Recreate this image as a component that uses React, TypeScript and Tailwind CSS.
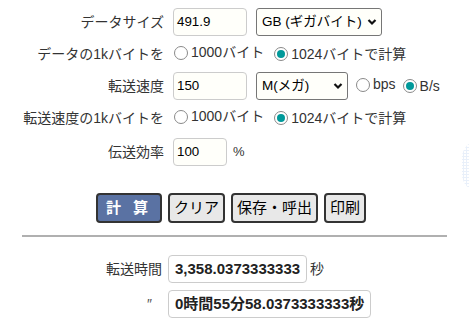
import React from "react";

const font = "font-['Liberation_Sans','Noto_Sans_CJK_JP',sans-serif]";

function Radio({ checked, label }: { checked?: boolean; label: string }) {
  return (
    <span className="inline-flex items-center">
      <span className="w-[14px] h-[14px] rounded-full border border-[#8a8a8a] bg-white flex items-center justify-center">
        {checked && <span className="w-[8px] h-[8px] rounded-full bg-[#00999a]" />}
      </span>
      <span className="ml-[3px]">{label}</span>
    </span>
  );
}

function Select({ value, w }: { value: string; w: string }) {
  return (
    <div
      className={`${w} h-[28px] border border-[#767676] rounded-[3px] bg-[#fffffa] flex items-center justify-between pl-[5px] pr-[4px] text-[13.5px] text-black`}
    >
      <span>{value}</span>
      <svg width="10" height="8" viewBox="0 0 10 8">
        <path d="M1.5 2 L5 5.5 L8.5 2" fill="none" stroke="#111" strokeWidth="2.2" />
      </svg>
    </div>
  );
}

function Field({ value, w }: { value: string; w: string }) {
  return (
    <div
      className={`${w} h-[28px] border border-[#cccccc] rounded-[4px] bg-[#fffffa] flex items-center pl-[3px] text-[13.33px] text-black`}
    >
      {value}
    </div>
  );
}

function Row({ label, children, h = "h-[28px]" }: { label: string; children: React.ReactNode; h?: string }) {
  return (
    <div className={`flex items-center ${h}`}>
      <div className="w-[164px] text-right text-[14px] text-[#333]">{label}</div>
      <div className="pl-[9px] flex items-center text-[14px] text-[#333]">{children}</div>
    </div>
  );
}

function Btn({ children, primary }: { children: React.ReactNode; primary?: boolean }) {
  return (
    <button
      className={
        primary
          ? "h-[30px] w-[66px] border-2 border-[#333] rounded-[4px] bg-[#5a72a3] text-white font-bold text-[15px] tracking-[4px]"
          : "h-[30px] border-2 border-[#333] rounded-[4px] bg-[#e8e8e8] text-black text-[15px] px-[4px]"
      }
    >
      {children}
    </button>
  );
}

export default function App() {
  return (
    <div className={`relative w-[469px] h-[325px] bg-white overflow-hidden ${font}`}>
      <div className="pt-[8px] flex flex-col gap-[8px]">
        <Row label="データサイズ">
          <Field value="491.9" w="w-[74px]" />
          <div className="ml-[9px]">
            <Select value="GB (ギガバイト)" w="w-[126px]" />
          </div>
        </Row>
        <Row label="データの1kバイトを" h="h-[20px]">
          <span className="ml-[1px] mr-[10px]">
            <Radio label="1000バイト" />
          </span>
          <Radio checked label="1024バイトで計算" />
        </Row>
        <Row label="転送速度">
          <Field value="150" w="w-[74px]" />
          <div className="ml-[9px]">
            <Select value="M(メガ)" w="w-[92px]" />
          </div>
          <span className="ml-[8px] mr-[7px]">
            <Radio label="bps" />
          </span>
          <Radio checked label="B/s" />
        </Row>
        <Row label="転送速度の1kバイトを" h="h-[20px]">
          <span className="ml-[1px] mr-[10px]">
            <Radio label="1000バイト" />
          </span>
          <Radio checked label="1024バイトで計算" />
        </Row>
        <div className="mt-[2px]">
          <Row label="伝送効率">
            <Field value="100" w="w-[54px]" />
            <span className="ml-[6px] text-[13px]">%</span>
          </Row>
        </div>
      </div>

      <div className="mt-[27px] pl-[96px] flex gap-[6px]">
        <Btn primary>計 算</Btn>
        <Btn>クリア</Btn>
        <Btn>保存・呼出</Btn>
        <Btn>印刷</Btn>
      </div>

      <div className="mx-[22px] mt-[12px] h-[2px] bg-[#b0b0b0]" />

      <div className="mt-[18px] flex flex-col gap-[7px]">
        <div className="flex items-center h-[28px]">
          <div className="w-[162px] text-right text-[14px] text-[#333]">転送時間</div>
          <div className="ml-[6px] w-[139px] h-[28px] border border-[#cccccc] rounded-[4px] bg-white flex items-center pl-[6px] font-bold text-[15px] text-[#222]">
            3,358.0373333333
          </div>
          <span className="ml-[3px] text-[14px] text-[#333]">秒</span>
        </div>
        <div className="flex items-center h-[28px]">
          <div className="w-[162px] text-right text-[14px] text-[#555] pr-[10px]">″</div>
          <div className="ml-[6px] w-[203px] h-[28px] border border-[#cccccc] rounded-[4px] bg-white flex items-center pl-[6px] font-bold text-[15px] text-[#222]">
            0時間55分58.0373333333秒
          </div>
        </div>
      </div>

      <div className="absolute left-[462px] top-[140px] w-[36px] h-[52px] rounded-full bg-[radial-gradient(#dce7f7_1px,transparent_1.2px)] bg-size-[3px_3px] opacity-60" />
    </div>
  );
}
